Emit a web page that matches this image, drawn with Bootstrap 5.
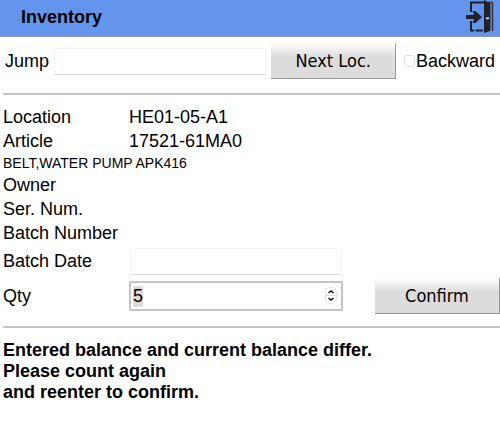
<!DOCTYPE html>
<html lang="en">
<head>
<meta charset="utf-8">
<meta name="viewport" content="width=device-width, initial-scale=1">
<title>Inventory</title>
<link href="https://cdn.jsdelivr.net/npm/bootstrap@5.3.0/dist/css/bootstrap.min.css" rel="stylesheet">
<style>
  body { font: 18px/24px "Liberation Sans", Arial, sans-serif; color: #000; background: #fff; }
  .topbar { background: #6495ed; border-bottom: 1px solid #8495b5; height: 37px; padding: 0 6px 2px 21px; }
  .topbar h1 { font-size: 18px; line-height: 24px; font-weight: 700; }
  .exit-btn { line-height: 0; }
  .jump-row { padding: 6px 5px 14px; }
  .rule { margin: 0 0 0 3px; border: 0; border-top: 2px solid #c4c4c4; opacity: 1; }
  .field { border: 1px solid #f3f3f3; border-bottom-color: #d8d8d8; border-radius: 0; height: 27px; padding: 0 4px; font-size: 18px; color: #000; min-width: 0; }
  .jump-field { margin-left: 5px; }
  .action { width: 125px; height: 36px; flex: none; border: 0 solid #999; border-width: 0 1px 1px 0; border-radius: 0; padding: 0; color: #000;
    font: 18px/24px "DejaVu Sans Condensed", "DejaVu Sans", sans-serif;
    background: linear-gradient(#fff 0, #dcdcdc 14px, #dcdcdc 100%); }
  .next-btn { margin: 0 8px 0 5px; }
  .tick { appearance: none; width: 12px; height: 12px; margin: 0 1px 0 0; border: 1px solid #dedede; border-radius: 3px; background: #fff; }
  .tick:checked { background: #6495ed; }
  .details { padding: 10px 0 11px 3px; }
  .name { width: 126px; flex: none; }
  .descr { font-size: 14px; line-height: 20px; }
  .date-row { height: 32px; }
  .qty-row { height: 38px; }
  .value-box { width: 43%; }
  .date-row .value-box { padding: 0 1px; }
  .qty-field { appearance: textfield; border: 2px solid #c4c4c4; border-radius: 2px; height: 30px; padding: 0 2px; font-size: 18px; color: #000; outline: 0; }
  .qty-field::-webkit-inner-spin-button { display: none; }
  .qty-field::selection { background: #dcdcdc; color: #000; }
  .stepper { width: 12px; height: 17px; right: 6px; top: 6px; border: 1px solid #e6e6e6; border-radius: 5px; background: #fff; }
  .stepper button { display: block; width: 10px; height: 7px; border: 0; padding: 0; background: none; line-height: 0; }
  .stepper button + button { border-top: 1px solid #ddd; height: 8px; }
  .message { padding: 12px 3px; line-height: 21px; font-weight: 700; }
</style>
<script src="https://cdn.jsdelivr.net/npm/bootstrap@5.3.0/dist/js/bootstrap.bundle.min.js"></script>
</head>
<body>
<header class="topbar d-flex align-items-center justify-content-between">
  <h1 class="m-0">Inventory</h1>
  <button type="button" class="exit-btn border-0 bg-transparent p-0" aria-label="Exit">
    <svg width="29" height="34" viewBox="0 0 29 34" aria-hidden="true">
      <path d="M6 12V2.500H19M6 21V30.500H9M10.500 30.500H18" fill="none" stroke="#222" stroke-width="2"/>
      <path d="M23 2.500H28M27.500 2V31" fill="none" stroke="#333" stroke-width="1.500"/>
      <path d="M25.500 4V31" stroke="#4a5f8c" stroke-width="1"/>
      <path d="M19 0L25 3V31L19 33Z" fill="#222"/>
      <path d="M1 15H9L7.500 11H10.500L17 17L10.500 23H7.500L9 19H1Z" fill="#222"/>
      <path d="M21 18.500L24 18" stroke="#b9cdf5" stroke-width="2"/>
    </svg>
  </button>
</header>
<main>
  <form>
    <div class="jump-row d-flex align-items-center">
      <label for="jump">Jump</label>
      <input type="text" id="jump" class="field jump-field flex-grow-1">
      <button type="button" class="action next-btn">Next Loc.</button>
      <input type="checkbox" id="backward" class="tick">
      <label for="backward">Backward</label>
    </div>
    <hr class="rule">
    <div class="details">
      <div class="d-flex"><div class="name">Location</div><div>HE01-05-A1</div></div>
      <div class="d-flex"><div class="name">Article</div><div>17521-61MA0</div></div>
      <div class="descr">BELT,WATER PUMP APK416</div>
      <div>Owner</div>
      <div>Ser. Num.</div>
      <div>Batch Number</div>
      <div class="date-row d-flex align-items-center">
        <label for="date" class="name">Batch Date</label>
        <div class="value-box d-flex"><input type="text" id="date" class="field w-100"></div>
      </div>
      <div class="qty-row d-flex align-items-center">
        <label for="qty" class="name">Qty</label>
        <div class="value-box position-relative d-flex">
          <input type="number" id="qty" class="qty-field w-100" value="5">
          <div class="stepper position-absolute">
            <button type="button" id="up" aria-label="Increase"><svg width="10" height="7" viewBox="0 0 10 7"><path d="M2.500 5L5 3L7.500 5" fill="none" stroke="#111" stroke-width="1.500"/></svg></button>
            <button type="button" id="down" aria-label="Decrease"><svg width="10" height="7" viewBox="0 0 10 7"><path d="M2.500 2L5 4L7.500 2" fill="none" stroke="#111" stroke-width="1.500"/></svg></button>
          </div>
        </div>
        <button type="button" class="action ms-auto">Confirm</button>
      </div>
    </div>
    <hr class="rule">
  </form>
  <div class="message" role="alert">Entered balance and current balance differ.<br>Please count again<br>and reenter to confirm.</div>
</main>
<script>
  const qty = document.getElementById('qty');
  document.getElementById('up').onclick = () => qty.stepUp();
  document.getElementById('down').onclick = () => qty.stepDown();
  qty.focus();
  qty.select();
</script>
</body>
</html>
